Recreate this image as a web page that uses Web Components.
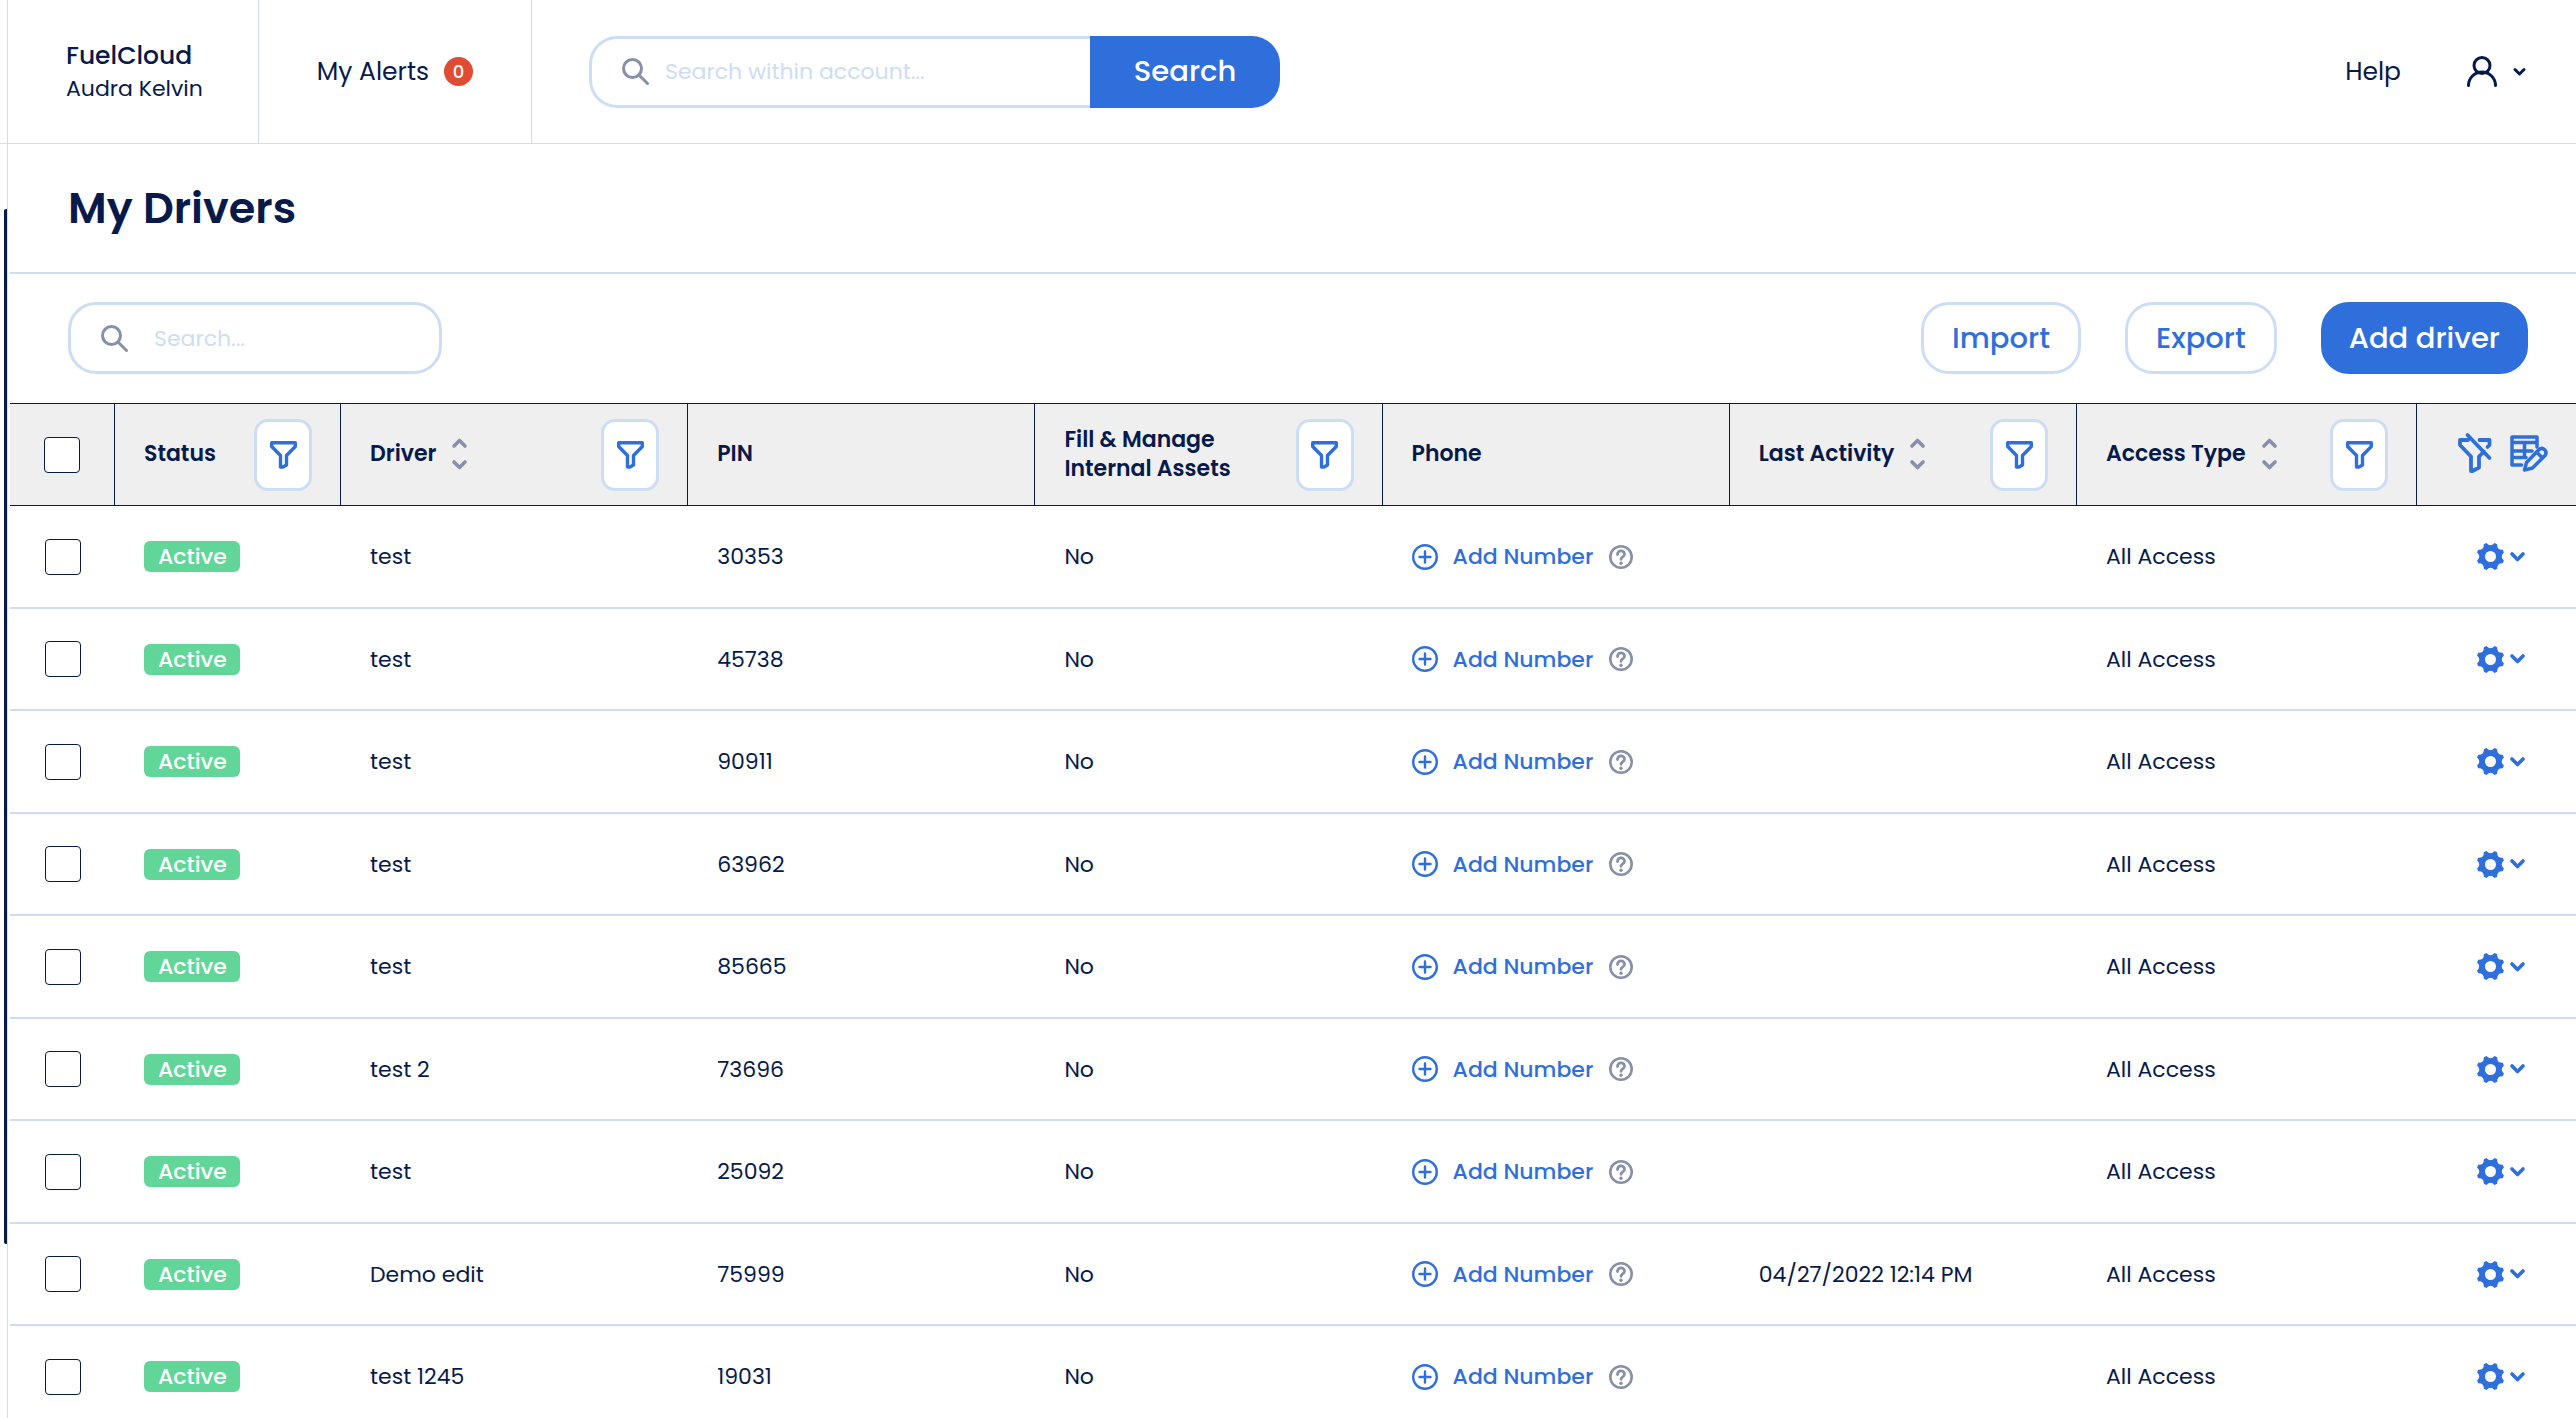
<!DOCTYPE html>
<html lang="en">
<head>
<meta charset="utf-8">
<title>My Drivers</title>
<style>
  html, body {
    height: 100%;
  }
  body {
    --navy: #071a4a;
    --blue: #2f6fdb;
    --line: #cdddf4;
    --muted: #8790a8;
    margin: 0;
    overflow: hidden;
    background: #fff;
    color: var(--navy);
    font-family: Poppins, Inter, sans-serif;
    font-size: 22px;
    line-height: 29px;
  }
</style>
</head>
<body>
<app-shell>
  <top-bar slot="header" company="FuelCloud" user="Audra Kelvin" alerts="0"></top-bar>
  <page-title>My Drivers</page-title>
  <tool-bar>
    <search-field slot="search" label="Search drivers" placeholder="Search..."></search-field>
    <pill-button>Import</pill-button>
    <pill-button>Export</pill-button>
    <pill-button primary>Add driver</pill-button>
  </tool-bar>
  <driver-table></driver-table>
</app-shell>

<script>
// eight teeth round a ring with a hole in it
function gearPath () {
  var point = (angle, radius) => {
    var rad = angle * Math.PI / 180;
    return (13.5 + radius * Math.cos(rad)).toFixed(2) + ' ' + (13.5 + radius * Math.sin(rad)).toFixed(2);
  };
  var d = '';
  for (var i = 0; i < 8; i++) {
    var tip = 22.5 + i * 45;
    d += (i ? 'L' : 'M') + point(tip - 6, 14) + 'L' + point(tip + 6, 14) + 'Q' + point(tip + 22.5, 9) + ' ' + point(tip + 39, 14);
  }
  return d + 'ZM19 13.5A5.5 5.5 0 1 0 8 13.5A5.5 5.5 0 1 0 19 13.5Z';
}

const ICONS = {
  search: [27, 27, '<circle cx="10.5" cy="10.5" r="9"/><path d="M17 17L25.5 25.5"/>'],
  user: [30, 31, '<circle cx="15" cy="9.5" r="8"/><path d="M1.5 29.5A13.5 13.5 0 0 1 28.5 29.5"/>'],
  small: [13, 10, '<path d="M2 2.5L6.5 7L11 2.5"/>'],
  down: [15, 10, '<path stroke-width="3.6" d="M2 2L7.5 7.5L13 2"/>'],
  up: [15, 10, '<path stroke-width="3.6" d="M2 8L7.5 2.5L13 8"/>'],
  filter: [27, 28, '<path stroke-width="3.4" d="M1.7 1.7H25.3V5.5L16.5 14.5V24L13 26H10.5V14.5L1.7 5.5Z"/>'],
  'filter-off': [34, 40, '<path stroke-width="3.8" d="M10 7H2V12L13 23.5V38H14.5L21 34.5V23.5L26 18.5M9.5 2L31.5 25M21.5 7H31.5V12L29.5 14"/>'],
  columns: [38, 37, '<g stroke-width="3.5"><path d="M11.5 30H2V2H27V12M2 7.5H27M2 16H22M2 22.5H16M14.5 7.5V22.5"/><path d="M14.5 35L16.5 27.5L29 14.5C33 11.5 38 16 35 20.5L22.5 33ZM27 17.5L32 22.5"/></g>'],
  plus: [26, 26, '<g stroke-width="2.4"><circle cx="13" cy="13" r="11.8"/><path d="M13 7.5V18.5M7.5 13H18.5"/></g>'],
  help: [24, 24, '<circle cx="12" cy="12" r="10.7" stroke-width="2.6"/><path stroke-width="2.8" d="M8.5 9.5C8.5 4.5 15.5 4.7 15.5 9.3C15.5 12 12 11.7 12 14.3"/><circle cx="12" cy="18.3" r="1.7" fill="currentColor" stroke="none"/>'],
  gear: [27, 27, `<path fill="currentColor" fill-rule="evenodd" stroke="none" d="${gearPath()}"/>`]
};

class BaseElement extends HTMLElement {
  connectedCallback () {
    if (this.shadowRoot) {
      return;
    }
    var template = document.createElement('template');
    template.innerHTML = this.htmlTemplate;
    this.attachShadow({ mode: 'open' });
    this.shadowRoot.appendChild(template.content.cloneNode(true));
  }
}

class FcIcon extends BaseElement {
  get htmlTemplate () {
    var [width, height, shape] = ICONS[this.getAttribute('name')];
    return `<style>
        :host {
          display: inline-flex;
          flex: none;
        }
        svg {
          overflow: visible;
        }
      </style>
      <svg width="${width}" height="${height}" viewBox="0 0 ${width} ${height}" fill="none" stroke="currentColor"
        stroke-width="3" stroke-linecap="round" stroke-linejoin="round" aria-hidden="true">${shape}</svg>`;
  }
}

class AppShell extends BaseElement {
  get htmlTemplate () {
    return `<style>
        :host {
          display: flex;
          flex-direction: column;
          height: 100%;
        }
        .body {
          display: flex;
          flex: 1;
          min-height: 0;
        }
        .rail {
          box-sizing: border-box;
          flex: none;
          width: 8px;
          padding: 65px 0 174px 4px;
          border-right: 1px solid var(--line);
        }
        /* scroll thumb of the folded side menu */
        .thumb {
          height: 100%;
          background: var(--navy);
          border-radius: 2px 0 0 2px;
        }
        main {
          flex: 1;
          min-width: 0;
          margin-left: 2px;
          overflow: hidden;
        }
      </style>
      <slot name="header"></slot>
      <div class="body">
        <div class="rail"><div class="thumb"></div></div>
        <main><slot></slot></main>
      </div>`;
  }
}

class TopBar extends BaseElement {
  get htmlTemplate () {
    return `<style>
        :host {
          display: block;
          border-bottom: 1px solid var(--line);
          font-size: 25px;
        }
        header {
          display: flex;
          height: 143px;
          margin-left: 7px;
          border-left: 1px solid var(--line);
        }
        .cell {
          display: flex;
          align-items: center;
          padding: 0 58px;
          border-right: 1px solid var(--line);
        }
        .account {
          display: flex;
          flex-direction: column;
          align-items: flex-start;
          justify-content: center;
          gap: 4px;
          padding-right: 55px;
        }
        .account strong {
          font-weight: 500;
        }
        .account span {
          font-size: 22px;
        }
        a {
          color: inherit;
          text-decoration: none;
        }
        .alerts {
          gap: 15px;
        }
        .count {
          width: 29px;
          border-radius: 50%;
          background: #df4b33;
          color: #fff;
          font-size: 18px;
          font-weight: 500;
          text-align: center;
        }
        .search {
          flex: 1;
          display: flex;
          align-items: center;
          padding-left: 57px;
        }
        search-field {
          width: 691px;
        }
        .right {
          display: flex;
          align-items: center;
          gap: 66px;
          padding-right: 50px;
        }
        button {
          display: flex;
          align-items: center;
          gap: 16px;
          padding: 0;
          border: none;
          background: none;
          color: inherit;
        }
      </style>
      <header>
        <div class="cell account">
          <strong>${this.getAttribute('company')}</strong>
          <span>${this.getAttribute('user')}</span>
        </div>
        <a class="cell alerts" href="#alerts">My Alerts <span class="count">${this.getAttribute('alerts')}</span></a>
        <div class="search">
          <search-field label="Search within account" placeholder="Search within account..." action="Search"></search-field>
        </div>
        <nav class="right">
          <a href="#help">Help</a>
          <button type="button" aria-label="Account menu"><fc-icon name="user"></fc-icon><fc-icon name="small"></fc-icon></button>
        </nav>
      </header>`;
  }
}

class SearchField extends BaseElement {
  get htmlTemplate () {
    var action = this.getAttribute('action');
    return `<style>
        :host {
          display: block;
        }
        form {
          display: flex;
          height: 72px;
        }
        label {
          box-sizing: border-box;
          flex: 1;
          min-width: 0;
          display: flex;
          align-items: center;
          gap: ${action ? 16 : 26}px;
          padding-left: 30px;
          border: 3px solid var(--line);
          border-radius: 28px;
          color: var(--muted);
          font-size: 22px;
        }
        .joined {
          border-right: none;
          border-radius: 28px 0 0 28px;
        }
        input {
          flex: 1;
          min-width: 0;
          padding: 0;
          border: none;
          outline: none;
          background: none;
          color: var(--navy);
          font: inherit;
        }
        input::placeholder {
          color: var(--line);
          opacity: 1;
        }
        button {
          flex: none;
          width: 190px;
          border: none;
          border-radius: 0 28px 28px 0;
          background: var(--blue);
          color: #fff;
          font: inherit;
          font-size: 29px;
          font-weight: 500;
        }
      </style>
      <form role="search">
        <label class="${action ? 'joined' : ''}">
          <fc-icon name="search"></fc-icon>
          <input type="text" aria-label="${this.getAttribute('label')}" placeholder="${this.getAttribute('placeholder')}">
        </label>
        ${action ? `<button type="button">${action}</button>` : ''}
      </form>`;
  }
}

class PageTitle extends BaseElement {
  get htmlTemplate () {
    return `<style>
        :host {
          display: block;
          padding: 32px 58px;
          border-bottom: 2px solid var(--line);
        }
        h1 {
          margin: 0;
          font-size: 43px;
          line-height: 64px;
          font-weight: 600;
        }
      </style>
      <h1><slot></slot></h1>`;
  }
}

class ToolBar extends BaseElement {
  get htmlTemplate () {
    return `<style>
        :host {
          display: flex;
          align-items: center;
          gap: 44px;
          padding: 28px 48px 29px 58px;
        }
        .search {
          flex: 1;
        }
        ::slotted(search-field) {
          width: 374px;
        }
      </style>
      <div class="search"><slot name="search"></slot></div>
      <slot></slot>`;
  }
}

class PillButton extends BaseElement {
  get htmlTemplate () {
    return `<style>
        :host {
          display: block;
        }
        button {
          height: 72px;
          padding: 0 28px;
          border: 3px solid var(--line);
          border-radius: 28px;
          background: #fff;
          color: var(--blue);
          font: inherit;
          font-size: 29px;
          font-weight: 500;
        }
        :host([primary]) button {
          padding: 0 25px;
          border-color: var(--blue);
          background: var(--blue);
          color: #fff;
        }
      </style>
      <button type="button"><slot></slot></button>`;
  }
}

class ColumnHead extends BaseElement {
  get htmlTemplate () {
    return `<style>
        :host {
          display: flex;
          align-items: center;
          justify-content: space-between;
          padding: 0 28px 0 29px;
          height: 72px;
        }
        .label {
          display: flex;
          align-items: center;
          gap: 16px;
          padding-bottom: 2px;
          font-weight: 600;
          text-align: left;
        }
        button {
          display: flex;
          align-items: center;
          justify-content: center;
          padding: 0;
          border: none;
          background: none;
        }
        .sort {
          flex-direction: column;
          gap: 12px;
          color: var(--muted);
        }
        .filter {
          box-sizing: border-box;
          flex: none;
          width: 58px;
          height: 72px;
          border: 3px solid var(--line);
          border-radius: 14px;
          background: #fff;
          color: var(--blue);
        }
      </style>
      <div class="label">
        <span><slot></slot></span>
        ${this.hasAttribute('sort') ? '<button type="button" class="sort" aria-label="Sort"><fc-icon name="up"></fc-icon><fc-icon name="down"></fc-icon></button>' : ''}
      </div>
      ${this.hasAttribute('filter') ? '<button type="button" class="filter" aria-label="Filter"><fc-icon name="filter"></fc-icon></button>' : ''}`;
  }
}

class StatusBadge extends BaseElement {
  get htmlTemplate () {
    return `<style>
        :host {
          display: inline-block;
          padding: 1px 13px 1px 14px;
          border-radius: 6px;
          background: #62d699;
          color: #fff;
          font-weight: 500;
        }
      </style>
      <slot></slot>`;
  }
}

class AddNumber extends BaseElement {
  get htmlTemplate () {
    return `<style>
        :host {
          display: flex;
          align-items: center;
          gap: 16px;
        }
        button {
          display: flex;
          align-items: center;
          padding: 0;
          border: none;
          background: none;
          font: inherit;
        }
        .add {
          gap: 15px;
          color: var(--blue);
          font-weight: 500;
        }
        .help {
          color: var(--muted);
        }
      </style>
      <button type="button" class="add"><fc-icon name="plus"></fc-icon>Add Number</button>
      <button type="button" class="help" aria-label="About phone numbers"><fc-icon name="help"></fc-icon></button>`;
  }
}

class DriverTable extends BaseElement {
  get drivers () {
    return [
      ['test', '30353', ''],
      ['test', '45738', ''],
      ['test', '90911', ''],
      ['test', '63962', ''],
      ['test', '85665', ''],
      ['test 2', '73696', ''],
      ['test', '25092', ''],
      ['Demo edit', '75999', '04/27/2022 12:14 PM'],
      ['test 1245', '19031', '']
    ];
  }
  renderRow ([name, pin, activity]) {
    return `<tr>
        <td class="check"><input type="checkbox" aria-label="Select ${name} ${pin}"></td>
        <td><status-badge>Active</status-badge></td>
        <td>${name}</td>
        <td>${pin}</td>
        <td>No</td>
        <td><add-number></add-number></td>
        <td>${activity}</td>
        <td>All Access</td>
        <td><button type="button" class="menu" aria-label="Driver actions"><fc-icon name="gear"></fc-icon><fc-icon name="down"></fc-icon></button></td>
      </tr>`;
  }
  get htmlTemplate () {
    return `<style>
        :host {
          display: block;
        }
        table {
          width: 100%;
          table-layout: fixed;
          border-collapse: separate;
          border-spacing: 0;
        }
        .narrow { width: 105px; }
        .status { width: 226px; }
        .access { width: 340px; }
        .actions { width: 159px; }
        th, td {
          box-sizing: border-box;
          padding: 0;
          text-align: left;
          vertical-align: middle;
        }
        th {
          height: 103px;
          background: #efefef;
          border: solid var(--navy);
          border-width: 1px 1px 1px 0;
        }
        th:last-child {
          border-right: none;
        }
        td {
          height: 103px;
          padding-left: 29px;
          border-bottom: 2px solid var(--line);
        }
        tr:nth-child(even) td {
          height: 102px;
        }
        .check {
          padding: 0;
          text-align: center;
        }
        input {
          appearance: none;
          display: inline-block;
          box-sizing: border-box;
          width: 36px;
          height: 36px;
          margin: 0;
          border: 1px solid var(--navy);
          border-radius: 4px;
          background: #fff;
          vertical-align: middle;
        }
        button {
          padding: 0;
          border: none;
          background: none;
          color: var(--blue);
        }
        .tools {
          display: flex;
          align-items: center;
          gap: 18px;
          padding: 0 0 3px 41px;
        }
        .tools button {
          display: flex;
        }
        .menu {
          display: flex;
          align-items: center;
          gap: 6px;
          margin-left: 31px;
        }
      </style>
      <table>
        <colgroup>
          <col class="narrow"><col class="status"><col><col><col><col><col><col class="access"><col class="actions">
        </colgroup>
        <thead>
          <tr>
            <th class="check"><input type="checkbox" aria-label="Select all drivers"></th>
            <th><column-head filter>Status</column-head></th>
            <th><column-head sort filter>Driver</column-head></th>
            <th><column-head>PIN</column-head></th>
            <th><column-head filter>Fill &amp; Manage<br>Internal Assets</column-head></th>
            <th><column-head>Phone</column-head></th>
            <th><column-head sort filter>Last Activity</column-head></th>
            <th><column-head sort filter>Access Type</column-head></th>
            <th><div class="tools">
              <button type="button" aria-label="Clear filters"><fc-icon name="filter-off"></fc-icon></button>
              <button type="button" aria-label="Edit columns"><fc-icon name="columns"></fc-icon></button>
            </div></th>
          </tr>
        </thead>
        <tbody>${this.drivers.map(this.renderRow).join('')}</tbody>
      </table>`;
  }
}

window.customElements.define('fc-icon', FcIcon);
window.customElements.define('search-field', SearchField);
window.customElements.define('pill-button', PillButton);
window.customElements.define('top-bar', TopBar);
window.customElements.define('page-title', PageTitle);
window.customElements.define('tool-bar', ToolBar);
window.customElements.define('column-head', ColumnHead);
window.customElements.define('status-badge', StatusBadge);
window.customElements.define('add-number', AddNumber);
window.customElements.define('driver-table', DriverTable);
window.customElements.define('app-shell', AppShell);
</script>
</body>
</html>
